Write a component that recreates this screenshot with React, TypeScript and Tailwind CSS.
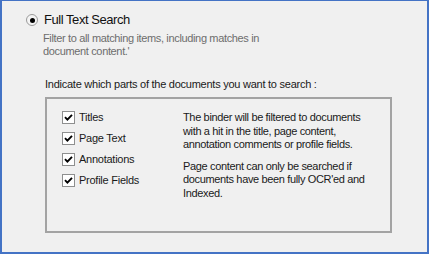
import React from 'react';

const Check = () => (
  <span className="flex h-[13px] w-[13px] shrink-0 items-center justify-center border border-[#8e8f8f] bg-white">
    <svg width="9" height="9" viewBox="0 0 9 9">
      <path d="M1 4.2 L3.4 6.6 L8 1.8" fill="none" stroke="#000" strokeWidth="1.9" />
    </svg>
  </span>
);

const options = ['Titles', 'Page Text', 'Annotations', 'Profile Fields'];

export default function App() {
  return (
    <div
      className="flex h-[254px] w-[429px] flex-col border-2 border-t border-[#4473c5] bg-[#f0f0f0] text-[11px] text-[#1a1a1a]"
      style={{ fontFamily: '"Liberation Sans", Arial, sans-serif' }}
    >
      {/* Option header */}
      <div className="mt-[11px] flex h-[16px] items-center pl-[24px]">
        <span className="flex h-[12px] w-[12px] items-center justify-center rounded-full border border-[#9a9a9a] bg-[#f4f4f4]">
          <span className="h-[5px] w-[5px] rounded-full bg-black" />
        </span>
        <span className="ml-[6px] text-[13px] leading-[16px] tracking-[-0.45px] text-[#111]">Full Text Search</span>
      </div>
      <p className="mt-[4px] pl-[41px] text-[11px] leading-[13px] tracking-[-0.35px] text-[#6d6d6d]">
        Filter to all matching items, including matches in
        <br />
        document content.'
      </p>

      <div className="pl-[43px] pr-[35px]">
        <p className="mt-[20px] leading-[13px] tracking-[-0.25px]">Indicate which parts of the documents you want to search :</p>

        {/* Group box */}
        <div className="mt-[6px] flex h-[136px] border-2 border-[#a3a3a3] pt-[12px]">
          <div className="flex w-[120px] flex-col gap-[8px] pl-[15px]">
            {options.map(o => (
              <label key={o} className="flex h-[13px] items-center gap-[4px] leading-[13px] tracking-[-0.25px]">
                <Check />
                {o}
              </label>
            ))}
          </div>
          <div className="flex flex-col gap-[8px] pl-[16px] leading-[13.5px] tracking-[-0.35px]">
            <p>
              The binder will be filtered to documents
              <br />
              with a hit in the title, page content,
              <br />
              annotation comments or profile fields.
            </p>
            <p>
              Page content can only be searched if
              <br />
              documents have been fully OCR'ed and
              <br />
              Indexed.
            </p>
          </div>
        </div>
      </div>
    </div>
  );
}
